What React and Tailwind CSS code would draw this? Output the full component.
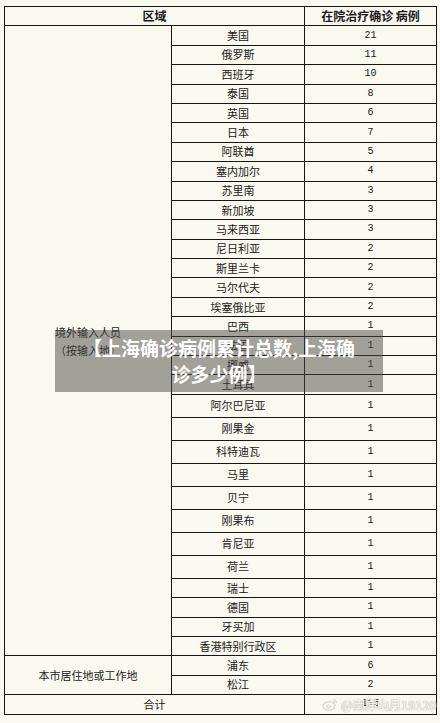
import React from 'react';

// 境外输入病例，tall = 行高 23px 的那几行
const abroad = [
  ['美国', '21'], ['俄罗斯', '11'], ['西班牙', '10'], ['泰国', '8'], ['英国', '6'],
  ['日本', '7'], ['阿联酋', '5'], ['塞内加尔', '4'], ['苏里南', '3'], ['新加坡', '3'],
  ['马来西亚', '3'], ['尼日利亚', '2'], ['斯里兰卡', '2'], ['马尔代夫', '2'], ['埃塞俄比亚', '2'],
  ['巴西', '1'], ['法国', '1'], ['挪威', '1'], ['土耳其', '1'],
  ['阿尔巴尼亚', '1', true], ['刚果金', '1', true], ['科特迪瓦', '1', true], ['马里', '1', true],
  ['贝宁', '1', true], ['刚果布', '1', true], ['肯尼亚', '1', true], ['荷兰', '1', true],
  ['瑞士', '1'], ['德国', '1'], ['牙买加', '1'], ['香港特别行政区', '1'],
];

const local = [['浦东', '6'], ['松江', '2']];

const cell = 'border border-[#151515] text-center align-middle p-0';
const cjk = "font-['Noto_Sans_CJK_SC',sans-serif] text-[11px] leading-none text-[#1a1a1a]";
const num = "font-['Liberation_Mono',monospace] text-[10px] leading-none text-[#1a1a1a]";

const App = () => {
  return (
    <div className="relative w-[440px] h-[723px] bg-[#faf9f0] overflow-hidden pt-[6px] pl-[4px]">
      <table className="table-fixed border-collapse w-[432px]">
        <colgroup>
          <col className="w-[167px]" />
          <col className="w-[133px]" />
          <col className="w-[132px]" />
        </colgroup>
        <tbody>
          <tr className="h-[19.4px]">
            <td colSpan={2} className={`${cell} ${cjk} font-bold text-[12px]`}>区域</td>
            <td className={`${cell} ${cjk} font-bold text-[12px]`}>在院治疗确诊 病例</td>
          </tr>
          {abroad.map(([name, n, tall], i) => (
            <tr key={name} className={tall ? 'h-[23px]' : 'h-[19.4px]'}>
              {i === 0 && (
                <td rowSpan={abroad.length} className={`${cell} ${cjk}`}>
                  <div className="leading-[18px]">境外输入人员</div>
                  <div className="leading-[18px]">（按输入地）</div>
                </td>
              )}
              <td className={`${cell} ${cjk}`}>{name}</td>
              <td className={`${cell} ${num}`}>{n}</td>
            </tr>
          ))}
          {local.map(([name, n], i) => (
            <tr key={name} className="h-[19.4px]">
              {i === 0 && (
                <td rowSpan={local.length} className={`${cell} ${cjk}`}>本市居住地或工作地</td>
              )}
              <td className={`${cell} ${cjk}`}>{name}</td>
              <td className={`${cell} ${num}`}>{n}</td>
            </tr>
          ))}
          <tr className="h-[19.4px]">
            <td colSpan={2} className={`${cell} ${cjk}`}>合计</td>
            <td className={`${cell} ${num}`}>115</td>
          </tr>
        </tbody>
      </table>

      {/* 标题遮罩 */}
      <div className="absolute left-[55px] top-[330px] w-[328px] h-[62px] bg-[rgba(72,72,66,0.5)] flex flex-col items-center justify-center">
        <div className="font-['Noto_Sans_CJK_SC',sans-serif] font-bold text-[19px] leading-[26px] text-white">
          【上海确诊病例累计总数,上海确
        </div>
        <div className="font-['Noto_Sans_CJK_SC',sans-serif] font-bold text-[19px] leading-[26px] text-white">
          诊多少例】
        </div>
      </div>

      {/* 水印 */}
      <div className="absolute left-[322px] top-[698px] flex items-center gap-[3px] text-[#f2f2ea] [text-shadow:0_0_1px_#8a8a84]">
        <svg width="16" height="13" viewBox="0 0 16 13" fill="none" stroke="#d8d8d0" strokeWidth="1.2">
          <ellipse cx="7" cy="8" rx="6" ry="4.2" />
          <ellipse cx="6.5" cy="8.5" rx="2" ry="1.5" />
          <path d="M11 1.5 a3.5 3.5 0 0 1 3.5 3.5" />
          <path d="M11 3.5 a1.5 1.5 0 0 1 1.5 1.5" />
        </svg>
        <span className="font-['Noto_Sans_CJK_SC',sans-serif] font-bold text-[12px] leading-none">@南岸山月19120</span>
      </div>
    </div>
  );
};

export default App;
